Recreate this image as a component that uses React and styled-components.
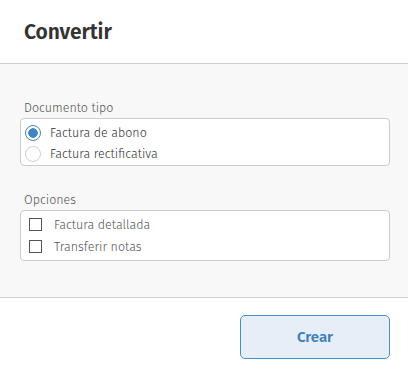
import React from 'react';
import styled, { createGlobalStyle } from 'styled-components';

const GlobalStyle = createGlobalStyle`
  html, body {
    margin: 0;
    padding: 0;
    background: #ffffff;
  }
  body {
    font-family: "Fira Sans", "Noto Sans", "Open Sans", sans-serif;
  }
`;

const Dialog = styled.div`
  display: flex;
  flex-direction: column;
  width: 408px;
  height: 378px;
  background: #ffffff;
`;

const Header = styled.div`
  display: flex;
  align-items: center;
  box-sizing: border-box;
  height: 64px;
  padding: 0 24px 0 24px;
  border-bottom: 1px solid #cfcfcf;
`;

const Title = styled.h1`
  margin: 0;
  font-size: 21px;
  font-weight: 600;
  color: #333333;
  letter-spacing: -0.1px;
`;

const Body = styled.div`
  display: flex;
  flex-direction: column;
  gap: 26px;
  box-sizing: border-box;
  height: 234px;
  padding: 36px 18px 0 20px;
  background: #f8f8f8;
  border-bottom: 1px solid #cfcfcf;
`;

const Group = styled.div`
  display: flex;
  flex-direction: column;
`;

const GroupLabel = styled.div`
  padding-left: 4px;
  margin-bottom: 2px;
  font-size: 12.5px;
  font-weight: 300;
  line-height: 16px;
  color: #555555;
`;

const OptionBox = styled.div`
  display: flex;
  flex-direction: column;
  box-sizing: border-box;
  padding: ${p => (p.$check ? '2px 4px 3px' : '3px 4px 1px')};
  background: #ffffff;
  border: 1px solid #cccccc;
  border-radius: 4px;
`;

const Row = styled.label`
  display: flex;
  align-items: center;
  gap: ${p => (p.$check ? '12px' : '9px')};
  height: ${p => (p.$check ? '22px' : '21px')};
  padding-left: ${p => (p.$check ? '4px' : '0')};
  font-size: 12.5px;
  font-weight: 300;
  color: ${p => (p.$check ? '#555555' : '#333333')};
`;

const Radio = styled.span`
  display: inline-block;
  box-sizing: border-box;
  width: 16px;
  height: 16px;
  border-radius: 50%;
  border: 1px solid ${p => (p.$on ? '#3f86c6' : '#cfcfcf')};
  background: ${p => (p.$on ? 'radial-gradient(circle, #3f86c6 0 4.5px, #ffffff 5px)' : '#ffffff')};
`;

const Check = styled.span`
  display: inline-block;
  box-sizing: border-box;
  width: 13px;
  height: 13px;
  border: 1px solid #555555;
  background: #ffffff;
`;

const Footer = styled.div`
  display: flex;
  justify-content: flex-end;
  align-items: flex-start;
  flex: 1;
  padding: 17px 18px 0 0;
`;

const Button = styled.button`
  width: 150px;
  height: 44px;
  border: 1px solid #4b90c8;
  border-radius: 5px;
  background: #e6eef8;
  color: #3f80bd;
  font-family: inherit;
  font-size: 15px;
  font-weight: 600;
  cursor: pointer;
`;

export default function App() {
  return (
    <>
      <GlobalStyle />
      <Dialog>
        <Header>
          <Title>Convertir</Title>
        </Header>
        <Body>
          <Group>
            <GroupLabel>Documento tipo</GroupLabel>
            <OptionBox>
              <Row>
                <Radio $on />
                Factura de abono
              </Row>
              <Row>
                <Radio />
                Factura rectificativa
              </Row>
            </OptionBox>
          </Group>
          <Group>
            <GroupLabel>Opciones</GroupLabel>
            <OptionBox $check>
              <Row $check>
                <Check />
                Factura detallada
              </Row>
              <Row $check>
                <Check />
                Transferir notas
              </Row>
            </OptionBox>
          </Group>
        </Body>
        <Footer>
          <Button>Crear</Button>
        </Footer>
      </Dialog>
    </>
  );
}
